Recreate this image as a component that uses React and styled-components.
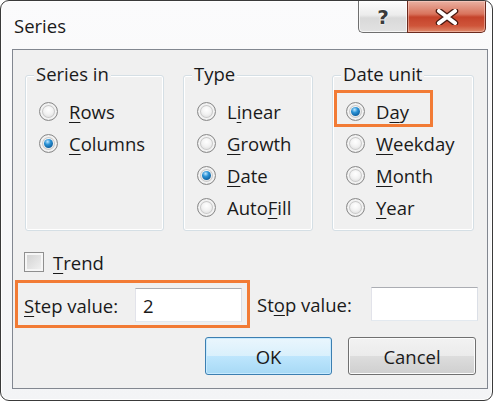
import styled, { createGlobalStyle } from "styled-components";

const GlobalStyle = createGlobalStyle`
  html, body {
    margin: 0;
    padding: 0;
    background: #ffffff;
  }
  body {
    font-family: "Open Sans", "Noto Sans", sans-serif;
    font-size: 18.5px;
    color: #1a1a1a;
  }
`;

const seriesIn = [
  { label: "Rows", key: 0 },
  { label: "Columns", key: 0, checked: true },
];

const types = [
  { label: "Linear", key: 1 },
  { label: "Growth", key: 0 },
  { label: "Date", key: 0, checked: true },
  { label: "AutoFill", key: 4 },
];

const dateUnits = [
  { label: "Day", key: 1, checked: true, highlight: true },
  { label: "Weekday", key: 0 },
  { label: "Month", key: 0 },
  { label: "Year", key: 0 },
];

const withKey = (label, key) => (
  <>
    {label.slice(0, key)}
    <Key>{label[key]}</Key>
    {label.slice(key + 1)}
  </>
);

const Group = ({ title, items, width }) => (
  <GroupBox $width={width}>
    <GroupTitle>{title}</GroupTitle>
    {items.map((item) => (
      <RadioRow key={item.label} $highlight={item.highlight}>
        <Radio $checked={item.checked} />
        <span>{withKey(item.label, item.key)}</span>
      </RadioRow>
    ))}
  </GroupBox>
);

export default function App() {
  return (
    <>
      <GlobalStyle />
      <Window>
        <TitleBar>
          <Title>Series</Title>
          <Caption>
            <HelpButton>?</HelpButton>
            <CloseButton>
              <svg width="24" height="16" viewBox="0 0 24 16">
                <path
                  d="M4 2 L20 14 M20 2 L4 14"
                  stroke="#4a1b12"
                  strokeWidth="6.5"
                  strokeLinecap="round"
                />
                <path
                  d="M4 2 L20 14 M20 2 L4 14"
                  stroke="#ffffff"
                  strokeWidth="4"
                  strokeLinecap="round"
                />
              </svg>
            </CloseButton>
          </Caption>
        </TitleBar>
        <Client>
          <Groups>
            <Group title="Series in" items={seriesIn} width={139} />
            <Group title="Type" items={types} width={130} />
            <Group title="Date unit" items={dateUnits} width={142} />
          </Groups>
          <TrendRow>
            <Checkbox />
            <span>{withKey("Trend", 0)}</span>
          </TrendRow>
          <FieldRow>
            <StepBox>
              <span>{withKey("Step value:", 0)}</span>
              <Input>2</Input>
            </StepBox>
            <StopLabel>{withKey("Stop value:", 2)}</StopLabel>
            <Input />
          </FieldRow>
          <ButtonRow>
            <Button $primary>OK</Button>
            <Button>Cancel</Button>
          </ButtonRow>
        </Client>
      </Window>
    </>
  );
}

const Window = styled.div`
  width: 493px;
  height: 401px;
  box-sizing: border-box;
  border: 1px solid #3a3a3a;
  border-radius: 9px;
  background: linear-gradient(#fbfbfc, #f3f4f6);
  box-shadow: inset 0 0 0 1px #ffffff;
  display: flex;
  flex-direction: column;
  overflow: hidden;
`;

const TitleBar = styled.div`
  height: 48px;
  display: flex;
  align-items: center;
  justify-content: space-between;
  padding-left: 13px;
`;

const Title = styled.span`
  font-size: 18.5px;
  color: #1a1a1a;
`;

const Caption = styled.div`
  align-self: flex-start;
  display: flex;
  margin-right: 6px;
`;

const HelpButton = styled.div`
  width: 49px;
  height: 32px;
  box-sizing: border-box;
  border: 1px solid #6f6f6f;
  border-top: none;
  border-right: none;
  border-bottom-left-radius: 5px;
  background: linear-gradient(#fdfdfd, #ececec 45%, #d9d9d9 55%, #e2e2e2);
  box-shadow: inset 0 0 0 1px rgba(255, 255, 255, 0.7);
  display: flex;
  align-items: center;
  justify-content: center;
  font-family: "DejaVu Sans", sans-serif;
  font-weight: bold;
  font-size: 20px;
  color: #3b3b3b;
  text-shadow: 0 0 2px #ffffff, 0 0 2px #ffffff;
`;

const CloseButton = styled.div`
  width: 79px;
  height: 32px;
  box-sizing: border-box;
  border: 1px solid #6b2a1e;
  border-top: none;
  border-bottom-right-radius: 5px;
  background: linear-gradient(#eab1a2, #d9735c 42%, #c5432b 52%, #cf553a 80%, #de8a6c);
  box-shadow: inset 0 0 0 1px rgba(255, 220, 210, 0.45);
  display: flex;
  align-items: center;
  justify-content: center;
`;

const Client = styled.div`
  height: 340px;
  margin: 0 4px 11px 11px;
  box-sizing: border-box;
  border: 1px solid #828790;
  background: #f0f0f0;
  display: flex;
  flex-direction: column;
`;

const Groups = styled.div`
  display: flex;
  gap: 19px;
  margin-top: 25px;
  padding-left: 12px;
`;

const GroupBox = styled.div`
  position: relative;
  width: ${(p) => p.$width}px;
  height: 156px;
  box-sizing: border-box;
  border: 1px solid #d5dfe5;
  border-radius: 3px;
  box-shadow: inset 0 0 0 1px #ffffff;
  padding: 19px 0 0 13px;
`;

const GroupTitle = styled.span`
  position: absolute;
  top: -14px;
  left: 8px;
  padding: 0 2px;
  background: #f0f0f0;
  line-height: 24px;
`;

const RadioRow = styled.div`
  position: relative;
  height: 32px;
  display: flex;
  align-items: center;
  gap: 11px;
  ${(p) =>
    p.$highlight &&
    `
    &::before {
      content: "";
      position: absolute;
      left: -12px;
      top: -5px;
      width: 99px;
      height: 37px;
      box-sizing: border-box;
      border: 3px solid #f27b35;
    }
  `}
`;

const Radio = styled.span`
  position: relative;
  flex: none;
  width: 19px;
  height: 19px;
  box-sizing: border-box;
  border-radius: 50%;
  border: 1px solid #8a8a8a;
  background: radial-gradient(circle at 50% 40%, #ffffff 0, #f2f2f2 35%, #cfcfcf 80%, #c2c2c2 100%);
  box-shadow: inset 0 0 0 2px #f2f2f2, inset 0 0 0 3px #c9c9c9;
  &::after {
    content: "";
    display: ${(p) => (p.$checked ? "block" : "none")};
    position: absolute;
    left: 4px;
    top: 4px;
    width: 9px;
    height: 9px;
    border-radius: 50%;
    background: radial-gradient(circle at 40% 30%, #bfe6ff 0, #2b93d6 35%, #0b5a99 80%, #14466e 100%);
  }
`;

const Key = styled.span`
  text-decoration: underline;
  text-underline-offset: 3px;
`;

const TrendRow = styled.div`
  height: 24px;
  margin-top: 19px;
  padding-left: 11px;
  display: flex;
  align-items: center;
  gap: 9px;
`;

const Checkbox = styled.span`
  flex: none;
  width: 20px;
  height: 20px;
  box-sizing: border-box;
  border: 1px solid #8f8f8f;
  background: linear-gradient(135deg, #cfcfcf, #f4f4f4);
  box-shadow: inset 0 0 0 2px #f6f6f6;
`;

const FieldRow = styled.div`
  margin-top: 6px;
  padding: 0 9px 0 2px;
  display: flex;
  align-items: center;
`;

const StepBox = styled.div`
  width: 235px;
  height: 48px;
  box-sizing: border-box;
  border: 3px solid #f27b35;
  padding: 5px 5px 3px 6px;
  display: flex;
  align-items: center;
  justify-content: space-between;
`;

const StopLabel = styled.span`
  margin-left: 7px;
  margin-right: auto;
`;

const Input = styled.div`
  width: 107px;
  height: 34px;
  box-sizing: border-box;
  border: 1px solid #abadb3;
  border-color: #abadb3 #dbdfe6 #e3e9ef #e2e3ea;
  background: #ffffff;
  padding-left: 7px;
  display: flex;
  align-items: center;
`;

const ButtonRow = styled.div`
  margin-top: 9px;
  padding-right: 11px;
  display: flex;
  justify-content: flex-end;
  gap: 16px;
`;

const Button = styled.div`
  width: ${(p) => (p.$primary ? 127 : 128)}px;
  height: 38px;
  box-sizing: border-box;
  border-radius: 3px;
  border: 1px solid ${(p) => (p.$primary ? "#3c7fb1" : "#707070")};
  background: ${(p) =>
    p.$primary
      ? "linear-gradient(#eaf6fd, #d9f0fc 50%, #bee6fd 50%, #a7d9f5)"
      : "linear-gradient(#f2f2f2, #ebebeb 50%, #dddddd 50%, #cfcfcf)"};
  box-shadow: inset 0 0 0 1px ${(p) => (p.$primary ? "#c7eaff" : "#fcfcfc")};
  display: flex;
  align-items: center;
  justify-content: center;
  color: #1a1a1a;
`;
